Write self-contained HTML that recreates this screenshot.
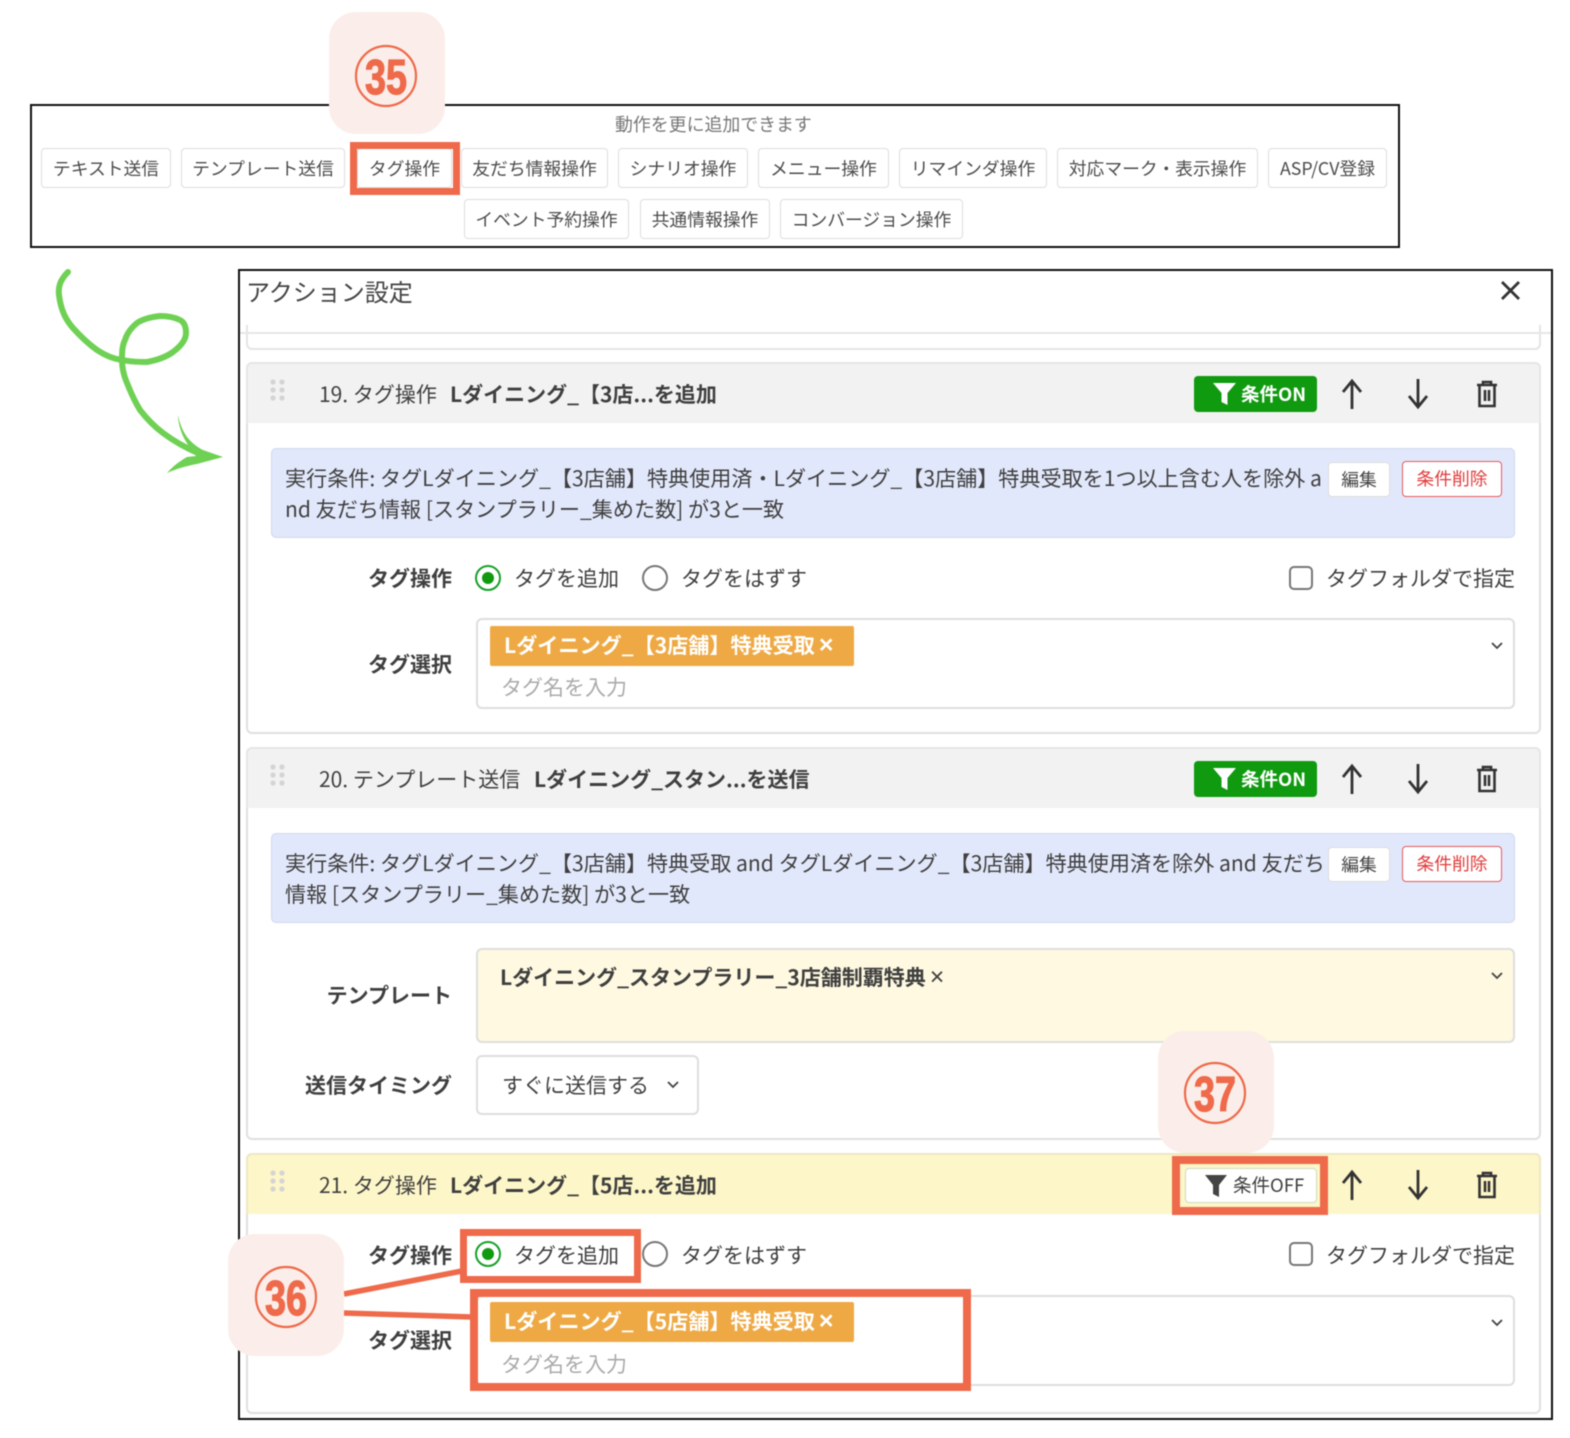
<!DOCTYPE html>
<html lang="ja"><head><meta charset="utf-8"><title>アクション設定</title>
<style>
html,body{margin:0;padding:0;background:#fff}
#p{position:relative;width:1570px;height:1438px;overflow:hidden;background:#fff;font-family:"Noto Sans CJK JP","Liberation Sans",sans-serif;color:#3f3f3f;filter:blur(.4px)}
#p div,#p span,#p svg{position:absolute;box-sizing:border-box}
.t{white-space:nowrap;line-height:30px;height:30px;font-size:21px}
.b{font-weight:700}
.x{font-family:"Liberation Sans",sans-serif;font-style:normal;font-weight:700;font-size:25px;line-height:20px;margin-left:4px}
.btn{height:40px;border:1.5px solid #ddd;border-radius:4px;background:#fff;text-align:center;font-size:17.8px;line-height:38px;white-space:nowrap;color:#4c4c4c}
.blk{left:246px;width:1295px;border:2px solid #e0e0e0;border-radius:6px;background:#fff}
.hd{left:246px;width:1295px;height:61px;border-radius:6px 6px 0 0}
.cond{left:271px;width:1244px;height:90px;background:#e2e8fb;border:1.5px solid #cfd8ef;border-radius:5px}
.ed{left:1328px;width:62px;height:35px;background:#fff;border:1.5px solid #ddd;border-radius:4px;text-align:center;font-size:17.8px;line-height:33px;color:#444}
.del{left:1402px;width:100px;height:36px;background:#fff;border:1.5px solid #e45a5a;border-radius:4px;text-align:center;font-size:17.8px;line-height:33px;color:#e23c3c}
.sel{left:476px;width:1039px;height:91px;border:2px solid #dedede;border-radius:6px;background:#fff}
.tag{left:490px;width:364px;height:40px;background:#eea944;border-radius:2px;color:#fff;font-weight:700;font-size:21.1px;line-height:38px;padding-left:14px;white-space:nowrap}
.rad{width:26px;height:26px;border-radius:50%;border:2.5px solid #777;background:#fff}
.on{border-color:#17a02a}
.on::after{content:"";position:absolute;left:4.5px;top:4.5px;width:12px;height:12px;border-radius:50%;background:#109a10}
.chk{left:1289px;width:24px;height:24px;border:2.5px solid #777;border-radius:5px;background:#fff}
.bg{width:116px;height:122px;background:#fbeeea;border-radius:27px}
.red{border-style:solid;border-color:#ee6a4a;background:transparent}
.lb{text-align:right;left:252px;width:200px;font-weight:700}
.ph{color:#aaa}
.g{color:#fff;background:#109a10;border-radius:4px;left:1194px;width:123px;height:36px}
</style></head><body><div id="p">

<!-- top panel -->
<div style="left:30px;top:104px;width:1370px;height:144px;border:2px solid #111"></div>
<div class="t" style="left:615px;top:109px;font-size:17.9px;color:#777">動作を更に追加できます</div>
<div class="btn" style="left:41px;top:148px;width:130px">テキスト送信</div>
<div class="btn" style="left:181px;top:148px;width:164px">テンプレート送信</div>
<div class="btn" style="left:357px;top:148px;width:95px">タグ操作</div>
<div class="btn" style="left:461px;top:148px;width:147px">友だち情報操作</div>
<div class="btn" style="left:618px;top:148px;width:130px">シナリオ操作</div>
<div class="btn" style="left:758px;top:148px;width:131px">メニュー操作</div>
<div class="btn" style="left:899px;top:148px;width:148px">リマインダ操作</div>
<div class="btn" style="left:1057px;top:148px;width:201px">対応マーク・表示操作</div>
<div class="btn" style="left:1268px;top:148px;width:119px">ASP/CV登録</div>
<div class="btn" style="left:464px;top:199px;width:165px">イベント予約操作</div>
<div class="btn" style="left:640px;top:199px;width:130px">共通情報操作</div>
<div class="btn" style="left:780px;top:199px;width:183px">コンバージョン操作</div>
<div class="red" style="left:350px;top:142px;width:110px;height:53px;border-width:7px"></div>
<div class="bg" style="left:329px;top:12px;height:122px"></div>

<!-- modal -->
<div style="left:238px;top:269px;width:1315px;height:1151px;border:2px solid #111;background:#fff"></div>
<div class="t" style="left:246px;top:274px;font-size:24px;line-height:34px;height:34px;color:#444">アクション設定</div>
<svg style="left:1498px;top:278px" width="25" height="25" viewBox="0 0 25 25"><path d="M4 4L21 21M21 4L4 21" stroke="#333" stroke-width="2.8" fill="none"/></svg>
<div style="left:246px;top:325px;width:1295px;height:25px;border:2px solid #e4e4e4;border-top:0;border-radius:0 0 6px 6px"></div>
<div style="left:240px;top:332px;width:1311px;height:2px;background:#e6e6e6"></div>

<!-- block 19 -->
<div class="blk" style="top:362px;height:372px"></div>
<div class="hd" style="top:362px;background:#f2f2f2;border:2px solid #e6e6e6;border-bottom:0"></div>
<svg style="left:268px;top:377px" width="20" height="26"><g fill="#d4d4d4"><circle cx="5" cy="5" r="2.6"/><circle cx="14" cy="5" r="2.6"/><circle cx="5" cy="13" r="2.6"/><circle cx="14" cy="13" r="2.6"/><circle cx="5" cy="21" r="2.6"/><circle cx="14" cy="21" r="2.6"/></g></svg>
<div class="t" style="left:319px;top:379px;font-size:21px">19. タグ操作</div>
<div class="t b" style="left:450px;top:379px;font-size:21px">Lダイニング_【3店...を追加</div>
<div class="g" style="top:376px"></div>
<svg style="left:1211px;top:382px" width="26" height="24"><path d="M2 1H25L16.500 11V23L10.500 20V11Z" fill="#fff"/></svg>
<div class="t b" style="left:1241px;top:379px;font-size:18.5px;color:#fff">条件ON</div>
<svg style="left:1340px;top:378px" width="24" height="32"><path d="M12 31V3M3 14L12 3L21 14" stroke="#333" stroke-width="2.800" fill="none"/></svg>
<svg style="left:1406px;top:378px" width="24" height="32"><path d="M12 1V29M3 18L12 29L21 18" stroke="#333" stroke-width="2.800" fill="none"/></svg>
<svg style="left:1475px;top:380px" width="24" height="28"><path d="M2 5H22M8 5V2H16V5M4.500 5V26H19.500V5M10 10V21M14 10V21" stroke="#333" stroke-width="2.600" fill="none"/></svg>

<div class="cond" style="top:448px"></div>
<div class="t" style="left:285px;top:463px;font-size:21.1px">実行条件: タグLダイニング_【3店舗】特典使用済・Lダイニング_【3店舗】特典受取を1つ以上含む人を除外 a</div>
<div class="t" style="left:285px;top:494px;font-size:21.1px">nd 友だち情報 [スタンプラリー_集めた数] が3と一致</div>
<div class="ed" style="top:462px">編集</div>
<div class="del" style="top:461px">条件削除</div>

<div class="t lb" style="top:563px">タグ操作</div>
<div class="rad on" style="left:475px;top:565px"></div>
<div class="t" style="left:514px;top:563px">タグを追加</div>
<div class="rad" style="left:642px;top:565px"></div>
<div class="t" style="left:681px;top:563px">タグをはずす</div>
<div class="chk" style="top:566px"></div>
<div class="t" style="left:1326px;top:563px">タグフォルダで指定</div>
<div class="t lb" style="top:649px">タグ選択</div>
<div class="sel" style="top:618px"></div>
<div class="tag" style="top:626px">Lダイニング_【3店舗】特典受取<i class="x">×</i></div>
<div class="t ph" style="left:501px;top:672px">タグ名を入力</div>
<svg style="left:1490px;top:641px" width="14" height="10"><path d="M2 2L7 7L12 2" stroke="#444" stroke-width="1.800" fill="none"/></svg>

<!-- block 20 -->
<div class="blk" style="top:747px;height:393px"></div>
<div class="hd" style="top:747px;background:#f2f2f2;border:2px solid #e6e6e6;border-bottom:0"></div>
<svg style="left:268px;top:762px" width="20" height="26"><g fill="#d4d4d4"><circle cx="5" cy="5" r="2.6"/><circle cx="14" cy="5" r="2.6"/><circle cx="5" cy="13" r="2.6"/><circle cx="14" cy="13" r="2.6"/><circle cx="5" cy="21" r="2.6"/><circle cx="14" cy="21" r="2.6"/></g></svg>
<div class="t" style="left:319px;top:764px;font-size:21px">20. テンプレート送信</div>
<div class="t b" style="left:534px;top:764px;font-size:21px">Lダイニング_スタン...を送信</div>
<div class="g" style="top:761px"></div>
<svg style="left:1211px;top:767px" width="26" height="24"><path d="M2 1H25L16.500 11V23L10.500 20V11Z" fill="#fff"/></svg>
<div class="t b" style="left:1241px;top:764px;font-size:18.5px;color:#fff">条件ON</div>
<svg style="left:1340px;top:763px" width="24" height="32"><path d="M12 31V3M3 14L12 3L21 14" stroke="#333" stroke-width="2.800" fill="none"/></svg>
<svg style="left:1406px;top:763px" width="24" height="32"><path d="M12 1V29M3 18L12 29L21 18" stroke="#333" stroke-width="2.800" fill="none"/></svg>
<svg style="left:1475px;top:765px" width="24" height="28"><path d="M2 5H22M8 5V2H16V5M4.500 5V26H19.500V5M10 10V21M14 10V21" stroke="#333" stroke-width="2.600" fill="none"/></svg>

<div class="cond" style="top:833px"></div>
<div class="t" style="left:285px;top:848px;font-size:21.1px">実行条件: タグLダイニング_【3店舗】特典受取 and タグLダイニング_【3店舗】特典使用済を除外 and 友だち</div>
<div class="t" style="left:285px;top:879px;font-size:21.1px">情報 [スタンプラリー_集めた数] が3と一致</div>
<div class="ed" style="top:847px">編集</div>
<div class="del" style="top:846px">条件削除</div>

<div class="t lb" style="top:980px">テンプレート</div>
<div class="sel" style="top:948px;height:95px;background:#fef9e0"></div>
<div class="t b" style="left:500px;top:962px;font-size:21px">Lダイニング_スタンプラリー_3店舗制覇特典<i class="x" style="font-weight:400">×</i></div>
<svg style="left:1490px;top:971px" width="14" height="10"><path d="M2 2L7 7L12 2" stroke="#444" stroke-width="1.800" fill="none"/></svg>
<div class="t lb" style="top:1070px">送信タイミング</div>
<div class="sel" style="top:1055px;width:223px;height:60px"></div>
<div class="t" style="left:502px;top:1070px">すぐに送信する</div>
<svg style="left:666px;top:1080px" width="14" height="10"><path d="M2 2L7 7L12 2" stroke="#444" stroke-width="1.800" fill="none"/></svg>

<!-- block 21 -->
<div class="blk" style="top:1153px;height:261px"></div>
<div class="hd" style="top:1153px;background:#fdf6c8;border:2px solid #ece8c4;border-bottom:0"></div>
<svg style="left:268px;top:1168px" width="20" height="26"><g fill="#d4d4d4"><circle cx="5" cy="5" r="2.6"/><circle cx="14" cy="5" r="2.6"/><circle cx="5" cy="13" r="2.6"/><circle cx="14" cy="13" r="2.6"/><circle cx="5" cy="21" r="2.6"/><circle cx="14" cy="21" r="2.6"/></g></svg>
<div class="t" style="left:319px;top:1170px;font-size:21px">21. タグ操作</div>
<div class="t b" style="left:450px;top:1170px;font-size:21px">Lダイニング_【5店...を追加</div>
<div style="left:1185px;top:1168px;width:132px;height:35px;background:#fff;border:1.5px solid #cfdcc0;border-radius:4px"></div>
<svg style="left:1204px;top:1174px" width="24" height="24"><path d="M1 1H23L15 11V23L9 20V11Z" fill="#444"/></svg>
<div class="t" style="left:1233px;top:1170px;font-size:18.5px">条件OFF</div>
<svg style="left:1340px;top:1169px" width="24" height="32"><path d="M12 31V3M3 14L12 3L21 14" stroke="#333" stroke-width="2.800" fill="none"/></svg>
<svg style="left:1406px;top:1169px" width="24" height="32"><path d="M12 1V29M3 18L12 29L21 18" stroke="#333" stroke-width="2.800" fill="none"/></svg>
<svg style="left:1475px;top:1171px" width="24" height="28"><path d="M2 5H22M8 5V2H16V5M4.500 5V26H19.500V5M10 10V21M14 10V21" stroke="#333" stroke-width="2.600" fill="none"/></svg>

<div class="t lb" style="top:1240px">タグ操作</div>
<div class="rad on" style="left:475px;top:1241px"></div>
<div class="t" style="left:514px;top:1240px">タグを追加</div>
<div class="rad" style="left:642px;top:1241px"></div>
<div class="t" style="left:681px;top:1240px">タグをはずす</div>
<div class="chk" style="top:1242px"></div>
<div class="t" style="left:1326px;top:1240px">タグフォルダで指定</div>
<div class="t lb" style="top:1325px">タグ選択</div>
<div class="sel" style="top:1295px"></div>
<div class="tag" style="top:1302px">Lダイニング_【5店舗】特典受取<i class="x">×</i></div>
<div class="t ph" style="left:501px;top:1349px">タグ名を入力</div>
<svg style="left:1490px;top:1318px" width="14" height="10"><path d="M2 2L7 7L12 2" stroke="#444" stroke-width="1.800" fill="none"/></svg>

<!-- highlights -->
<div class="red" style="left:460px;top:1229px;width:181px;height:54px;border-width:7px"></div>
<div class="red" style="left:470px;top:1289px;width:501px;height:102px;border-width:8px"></div>
<div class="red" style="left:1172px;top:1156px;width:156px;height:59px;border-width:8px"></div>
<svg style="left:340px;top:1260px" width="135" height="70"><path d="M4 34L122 11M4 53L132 57" stroke="#ee6a4a" stroke-width="5.500" fill="none"/></svg>
<div class="bg" style="left:228px;top:1234px"></div>
<div class="bg" style="left:1158px;top:1031px;height:122px"></div>

<!-- badges -->
<svg style="left:0;top:0" width="1570" height="1438">
<g fill="none" stroke="#ee6a4a" stroke-width="2.200">
<circle cx="386" cy="76" r="30"/><circle cx="286" cy="1297" r="30"/><circle cx="1215" cy="1093" r="30"/>
</g>
<g fill="#ee6a4a" stroke="#ee6a4a" stroke-width="1.200" font-family="Liberation Sans" font-weight="700" font-size="49" text-anchor="middle">
<text x="386" y="94" textLength="42" lengthAdjust="spacingAndGlyphs">35</text>
<text x="286" y="1315" textLength="42" lengthAdjust="spacingAndGlyphs">36</text>
<text x="1215" y="1111" textLength="42" lengthAdjust="spacingAndGlyphs">37</text>
</g>
<path d="M68 272C60 280 58 287 59 295C61 311 66 320 73 328C82 338 90 345 97 350C106 356 114 359 122 360C132 362 140 362 147 362C158 360 166 357 173 352C181 346 186 340 186 333C186 326 184 322 180 320C174 317 167 316 160 316C151 317 143 319 137 323C131 328 127 333 125 340C122 346 122 353 122 360C122 368 124 376 127 383C131 393 135 402 140 410C147 419 155 427 163 433C175 442 186 448 200 454" fill="none" stroke="#6fd154" stroke-width="6" stroke-linecap="round"/>
<path d="M178 415C180 425 183 431 187 437C192 443 197 447 203 450L223 457L197 464C186 466 176 469 167 473C173 466 180 461 187 457L196 456C190 448 184 440 181 431C179 425 178 420 178 415Z" fill="#6fd154"/>
</svg>
</div></body></html>
